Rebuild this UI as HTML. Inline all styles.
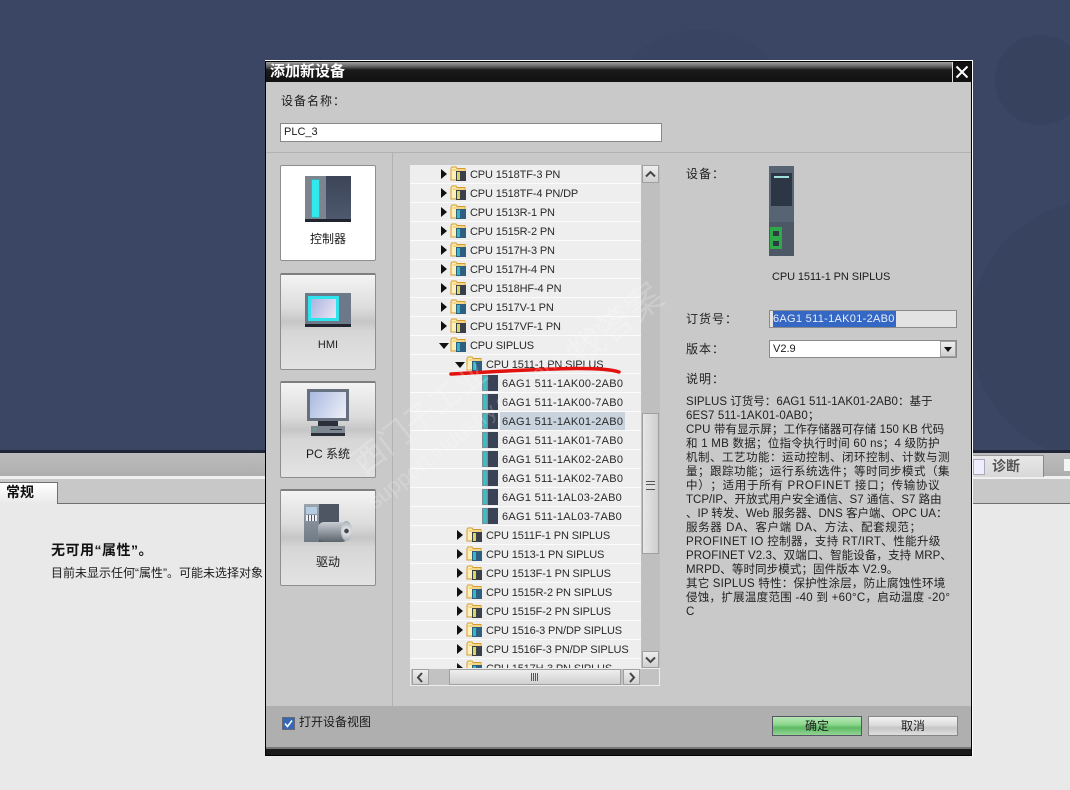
<!DOCTYPE html>
<html lang="zh"><head><meta charset="utf-8"><title>添加新设备</title>
<style>
html,body{margin:0;padding:0;width:1070px;height:790px;overflow:hidden;background:#e9e9e9}
body{position:relative;font-family:"Liberation Sans","Noto Sans CJK SC",sans-serif;font-size:12px;color:#1c1c1c;text-spacing-trim:space-all}
div,span,svg{position:absolute;display:block}
.t{white-space:nowrap;line-height:14px}
.row{left:0;width:231px;height:18px;background:#eeeeee;border-bottom:1px solid #fbfbfb}
.lab{white-space:nowrap;line-height:18px;font-size:11px;top:1px;letter-spacing:-.14px;color:#2a2a2a}
.g{letter-spacing:.28px}
.tri{width:0;height:0;border-style:solid;border-color:transparent transparent transparent #111;border-width:5px 0 5px 6px;top:4px}
.dn{width:0;height:0;border-style:solid;border-color:#111 transparent transparent;border-width:6px 5px 0 5px;top:7px}
.cat{left:15px;width:94px;height:94px;border:1px solid #8e8e8e;border-radius:2px;background:linear-gradient(#f4f4f4 0,#dcdcdc 35%,#c6c6c6 50%,#d6d6d6 60%,#e3e3e3 100%);border-top:2px solid #7e7e7e}
.cl{left:0;width:94px;text-align:center;top:63px;line-height:16px;white-space:nowrap}
.sb{background:linear-gradient(#eeeeee,#d0d0d0);border:1px solid #a0a0a0;box-sizing:border-box}
.d{left:686px;white-space:nowrap;font-size:12px;line-height:14px;color:#222}
.k{letter-spacing:1px}
.w{font-size:11.500px;letter-spacing:.1px}
.wm{color:rgba(255,255,255,.2);white-space:nowrap;transform-origin:0 100%;transform:rotate(-38deg)}
</style></head><body>
<svg width="0" height="0" style="left:0;top:0"><defs>
<symbol id="fb" viewBox="0 0 17 15"><path d="M1 14V2.500L2 1h4l1 1.500h8V14z" fill="#fdf0b8" stroke="#d69b2a"/><path d="M2.500 4H14" stroke="#e9bd55"/><rect x="6" y="5" width="10" height="10" fill="#2f5f80"/><rect x="7" y="6" width="3" height="8" fill="#33b9c6"/></symbol>
<symbol id="fd" viewBox="0 0 17 15"><path d="M1 14V2.500L2 1h4l1 1.500h8V14z" fill="#fdf0b8" stroke="#d69b2a"/><path d="M2.500 4H14" stroke="#e9bd55"/><rect x="6" y="5" width="10" height="10" fill="#39404a"/><rect x="7" y="6" width="3" height="8" fill="#d8d860"/></symbol>
<symbol id="dv" viewBox="0 0 16 16"><rect width="16" height="16" fill="#3e4b5e"/><rect x="0" width="6" height="16" fill="#7f8f98"/><rect x="1.500" y="1" width="3" height="14" fill="#2fc5cb"/><rect x="6" y="0" width="10" height="16" fill="#3a4356"/></symbol>
</defs></svg>

<!-- background -->
<div style="left:0;top:0;width:1070px;height:450px;background:#3a4664;overflow:hidden">
<svg width="1070" height="450" style="left:0;top:0"><circle cx="700" cy="130" r="100" fill="#384461"/><circle cx="1100" cy="330" r="130" fill="#37435f"/><circle cx="1040" cy="80" r="45" fill="#36425e"/></svg>
</div>
<div style="left:0;top:450px;width:1070px;height:3px;background:#1f2638"></div>
<div style="left:0;top:453px;width:1070px;height:23px;background:linear-gradient(#bdbdbd,#aeaeae)"></div>
<div style="left:0;top:476px;width:1070px;height:3px;background:#f0f0f0"></div>
<div style="left:0;top:479px;width:1070px;height:24px;background:#c8c8c8;border-bottom:1px solid #6f6f6f"></div>
<div style="left:0;top:482px;width:57px;height:22px;background:linear-gradient(#fff,#e8e8e8);border-right:1px solid #6f6f6f;border-top:1px solid #6f6f6f"></div>
<div class="t" style="left:6px;top:485px;font-size:14px;font-weight:bold;color:#111">常规</div>
<div style="left:0;top:504px;width:1070px;height:286px;background:#e9e9e9"></div>
<div class="t" style="left:51px;top:542px;font-size:14px;font-weight:bold;color:#111;line-height:16px;letter-spacing:.5px">无可用“属性”。</div>
<div class="t" style="left:51px;top:566px;font-size:12px">目前未显示任何“属性”。可能未选择对象</div>
<!-- right tab -->
<div style="left:972px;top:455px;width:71px;height:21px;background:linear-gradient(#e8e8e8,#d8d8d8);border-right:1px solid #888;border-top:1px solid #999"></div>
<div class="t" style="left:992px;top:458px;font-size:14px;font-weight:bold;color:#555;line-height:16px">诊断</div>
<div style="left:973px;top:459px;width:10px;height:14px;background:#eef;border:1px solid #aab"></div>
<div style="left:1064px;top:459px;width:6px;height:12px;background:#f4f4f4"></div>
<div style="left:972px;top:479px;width:98px;height:24px;background:#c8c8c8"></div>

<!-- dialog -->
<div style="left:265px;top:60px;width:707px;height:696px;background:#000;border-top:1px solid #fff;box-sizing:border-box"></div>
<div style="left:972px;top:60px;width:1px;height:697px;background:#fff"></div>
<div style="left:266px;top:62px;width:705px;height:20px;background:linear-gradient(#a0a0a0 0,#6a6a6a 20%,#1a1a1a 40%,#111 100%)"></div>
<div class="t" style="left:270px;top:63px;font-size:15px;color:#fff;font-weight:bold;line-height:18px">添加新设备</div>
<div style="left:952px;top:62px;width:19px;height:20px;background:#111;border-left:1px solid #ddd;box-sizing:border-box"></div>
<svg style="left:955px;top:65px" width="14" height="14" viewBox="0 0 14 14"><path d="M1.500 1.500L12.500 12.500M12.500 1.500L1.500 12.500" stroke="#fff" stroke-width="2"/></svg>
<div style="left:266px;top:82px;width:705px;height:666px;background:#c9c9c9"></div>
<div class="t k" style="left:281px;top:94px">设备名称：</div>
<div style="left:280px;top:123px;width:380px;height:17px;background:#fff;border:1px solid #888"></div>
<div class="t" style="left:284px;top:125px;font-size:11px">PLC_3</div>
<div style="left:266px;top:152px;width:705px;height:1px;background:#b2b2b2"></div>
<div style="left:392px;top:153px;width:1px;height:553px;background:#b2b2b2"></div>

<!-- category buttons -->
<div style="left:280px;top:165px;width:94px;height:94px;background:#fff;border:1px solid #8e8e8e;border-radius:2px"></div>
<div class="t" style="left:280px;top:232px;width:96px;text-align:center">控制器</div>
<div style="left:305px;top:176px;width:46px;height:46px;background:#3f4a60"></div>
<div style="left:305px;top:176px;width:21px;height:46px;background:#7c858f"></div>
<div style="left:311px;top:179px;width:9px;height:39px;background:#2fe9ef;border:1px solid #4aa;box-sizing:border-box"></div>
<div style="left:326px;top:176px;width:25px;height:44px;background:linear-gradient(#3c4558,#4e596e)"></div>
<div style="left:305px;top:219px;width:46px;height:3px;background:#20242e"></div>

<div class="cat" style="left:280px;top:273px"><div class="cl" style="left:0;top:62px;font-size:11px;color:#222">HMI</div></div>
<div style="left:305px;top:293px;width:46px;height:34px;background:#6d7888"></div>
<div style="left:308px;top:296px;width:31px;height:25px;background:#2fe3ee"></div>
<div style="left:311px;top:299px;width:25px;height:19px;background:linear-gradient(120deg,#a8b4df,#ece6f4)"></div>
<div style="left:305px;top:324px;width:46px;height:3px;background:#20242e"></div>

<div class="cat" style="left:280px;top:381px"><div class="cl" style="left:0;top:63px">PC 系统</div></div>
<div style="left:307px;top:389px;width:42px;height:32px;background:#66707e"></div>
<div style="left:310px;top:392px;width:36px;height:26px;background:linear-gradient(120deg,#a9b8e0,#eef1f8)"></div>
<div style="left:318px;top:421px;width:20px;height:5px;background:#2a2f3a"></div>
<div style="left:311px;top:426px;width:34px;height:7px;background:#7e8791"></div>
<div style="left:311px;top:433px;width:34px;height:3px;background:#2a2f3a"></div>
<div style="left:313px;top:428px;width:3px;height:3px;background:#5aa886"></div>
<div style="left:330px;top:429px;width:12px;height:1px;background:#2a2f3a"></div>

<div class="cat" style="left:280px;top:489px"><div class="cl" style="left:0;top:63px">驱动</div></div>
<div style="left:304px;top:504px;width:35px;height:38px;background:#4d5662"></div>
<div style="left:304px;top:504px;width:15px;height:38px;background:linear-gradient(#9aa4ae,#707a84)"></div>
<div style="left:306px;top:507px;width:11px;height:7px;background:#b5cde2"></div>
<div style="left:306px;top:515px;width:11px;height:6px;background:repeating-linear-gradient(90deg,#eef2f4 0,#eef2f4 2px,#556 2px,#556 3px)"></div>
<div style="left:318px;top:522px;width:30px;height:20px;background:linear-gradient(#c9ced4,#5c646c);border-radius:6px"></div>
<div style="left:341px;top:521px;width:11px;height:20px;background:radial-gradient(circle,#444 15%,#dde2e6 25%,#9aa3aa 100%);border-radius:50%"></div>

<!-- tree -->
<div style="left:410px;top:165px;width:250px;height:521px;background:#eee;overflow:hidden" id="tree">
<div class="row" style="top:0"><span class="tri" style="left:31px"></span><svg style="left:40px;top:1px" width="17" height="15"><use href="#fd"/></svg><span class="lab" style="left:60px">CPU 1518TF-3 PN</span></div>
<div class="row" style="top:19px"><span class="tri" style="left:31px"></span><svg style="left:40px;top:1px" width="17" height="15"><use href="#fd"/></svg><span class="lab" style="left:60px">CPU 1518TF-4 PN/DP</span></div>
<div class="row" style="top:38px"><span class="tri" style="left:31px"></span><svg style="left:40px;top:1px" width="17" height="15"><use href="#fb"/></svg><span class="lab" style="left:60px">CPU 1513R-1 PN</span></div>
<div class="row" style="top:57px"><span class="tri" style="left:31px"></span><svg style="left:40px;top:1px" width="17" height="15"><use href="#fb"/></svg><span class="lab" style="left:60px">CPU 1515R-2 PN</span></div>
<div class="row" style="top:76px"><span class="tri" style="left:31px"></span><svg style="left:40px;top:1px" width="17" height="15"><use href="#fb"/></svg><span class="lab" style="left:60px">CPU 1517H-3 PN</span></div>
<div class="row" style="top:95px"><span class="tri" style="left:31px"></span><svg style="left:40px;top:1px" width="17" height="15"><use href="#fb"/></svg><span class="lab" style="left:60px">CPU 1517H-4 PN</span></div>
<div class="row" style="top:114px"><span class="tri" style="left:31px"></span><svg style="left:40px;top:1px" width="17" height="15"><use href="#fd"/></svg><span class="lab" style="left:60px">CPU 1518HF-4 PN</span></div>
<div class="row" style="top:133px"><span class="tri" style="left:31px"></span><svg style="left:40px;top:1px" width="17" height="15"><use href="#fb"/></svg><span class="lab" style="left:60px">CPU 1517V-1 PN</span></div>
<div class="row" style="top:152px"><span class="tri" style="left:31px"></span><svg style="left:40px;top:1px" width="17" height="15"><use href="#fd"/></svg><span class="lab" style="left:60px">CPU 1517VF-1 PN</span></div>
<div class="row" style="top:171px"><span class="dn" style="left:29px"></span><svg style="left:40px;top:1px" width="17" height="15"><use href="#fb"/></svg><span class="lab" style="left:60px">CPU SIPLUS</span></div>
<div class="row" style="top:190px"><span class="dn" style="left:45px"></span><svg style="left:56px;top:1px" width="17" height="15"><use href="#fb"/></svg><span class="lab" style="left:76px">CPU 1511-1 PN SIPLUS</span></div>
<div class="row" style="top:209px"><svg style="left:72px;top:1px" width="16" height="16"><use href="#dv"/></svg><span class="lab g" style="left:92px">6AG1 511-1AK00-2AB0</span></div>
<div class="row" style="top:228px"><svg style="left:72px;top:1px" width="16" height="16"><use href="#dv"/></svg><span class="lab g" style="left:92px">6AG1 511-1AK00-7AB0</span></div>
<div class="row" style="top:247px"><svg style="left:72px;top:1px" width="16" height="16"><use href="#dv"/></svg><span style="left:90px;top:0;width:125px;height:18px;background:#c9d3de"></span><span class="lab g" style="left:92px">6AG1 511-1AK01-2AB0</span></div>
<div class="row" style="top:266px"><svg style="left:72px;top:1px" width="16" height="16"><use href="#dv"/></svg><span class="lab g" style="left:92px">6AG1 511-1AK01-7AB0</span></div>
<div class="row" style="top:285px"><svg style="left:72px;top:1px" width="16" height="16"><use href="#dv"/></svg><span class="lab g" style="left:92px">6AG1 511-1AK02-2AB0</span></div>
<div class="row" style="top:304px"><svg style="left:72px;top:1px" width="16" height="16"><use href="#dv"/></svg><span class="lab g" style="left:92px">6AG1 511-1AK02-7AB0</span></div>
<div class="row" style="top:323px"><svg style="left:72px;top:1px" width="16" height="16"><use href="#dv"/></svg><span class="lab g" style="left:92px">6AG1 511-1AL03-2AB0</span></div>
<div class="row" style="top:342px"><svg style="left:72px;top:1px" width="16" height="16"><use href="#dv"/></svg><span class="lab g" style="left:92px">6AG1 511-1AL03-7AB0</span></div>
<div class="row" style="top:361px"><span class="tri" style="left:47px"></span><svg style="left:56px;top:1px" width="17" height="15"><use href="#fd"/></svg><span class="lab" style="left:76px">CPU 1511F-1 PN SIPLUS</span></div>
<div class="row" style="top:380px"><span class="tri" style="left:47px"></span><svg style="left:56px;top:1px" width="17" height="15"><use href="#fb"/></svg><span class="lab" style="left:76px">CPU 1513-1 PN SIPLUS</span></div>
<div class="row" style="top:399px"><span class="tri" style="left:47px"></span><svg style="left:56px;top:1px" width="17" height="15"><use href="#fd"/></svg><span class="lab" style="left:76px">CPU 1513F-1 PN SIPLUS</span></div>
<div class="row" style="top:418px"><span class="tri" style="left:47px"></span><svg style="left:56px;top:1px" width="17" height="15"><use href="#fb"/></svg><span class="lab" style="left:76px">CPU 1515R-2 PN SIPLUS</span></div>
<div class="row" style="top:437px"><span class="tri" style="left:47px"></span><svg style="left:56px;top:1px" width="17" height="15"><use href="#fd"/></svg><span class="lab" style="left:76px">CPU 1515F-2 PN SIPLUS</span></div>
<div class="row" style="top:456px"><span class="tri" style="left:47px"></span><svg style="left:56px;top:1px" width="17" height="15"><use href="#fb"/></svg><span class="lab" style="left:76px">CPU 1516-3 PN/DP SIPLUS</span></div>
<div class="row" style="top:475px"><span class="tri" style="left:47px"></span><svg style="left:56px;top:1px" width="17" height="15"><use href="#fd"/></svg><span class="lab" style="left:76px">CPU 1516F-3 PN/DP SIPLUS</span></div>
<div class="row" style="top:494px"><span class="tri" style="left:47px"></span><svg style="left:56px;top:1px" width="17" height="15"><use href="#fb"/></svg><span class="lab" style="left:76px">CPU 1517H-3 PN SIPLUS</span></div>
<!-- v scrollbar -->
<div style="left:231px;top:0;width:19px;height:503px;background:#bfbfbf"></div>
<!-- h scrollbar -->
<div style="left:0;top:503px;width:250px;height:18px;background:#c2c2c2;border:1px solid #ededed;box-sizing:border-box"></div>
</div>
<div class="sb" style="left:642px;top:165px;width:17px;height:18px"></div>
<svg style="left:645px;top:170px" width="11" height="8"><path d="M1 6.500L5.500 2L10 6.500" fill="none" stroke="#444" stroke-width="2"/></svg>
<div class="sb" style="left:642px;top:413px;width:17px;height:141px;background:linear-gradient(90deg,#e6e6e6,#cfcfcf)"></div>
<div style="left:646px;top:481px;width:9px;height:7px;border-top:1px solid #555;border-bottom:1px solid #555;background:linear-gradient(#e0e0e0 0,#e0e0e0 2px,#555 2px,#555 3px,#e0e0e0 3px)"></div>
<div class="sb" style="left:642px;top:651px;width:17px;height:17px"></div>
<svg style="left:645px;top:656px" width="11" height="8"><path d="M1 1.500L5.500 6L10 1.500" fill="none" stroke="#444" stroke-width="2"/></svg>
<div class="sb" style="left:412px;top:669px;width:17px;height:16px"></div>
<svg style="left:416px;top:672px" width="8" height="11"><path d="M6 1L2 5.500L6 10" fill="none" stroke="#444" stroke-width="2"/></svg>
<div class="sb" style="left:449px;top:669px;width:172px;height:16px"></div>
<div style="left:531px;top:673px;width:1px;height:8px;background:#555;box-shadow:2px 0 #555,4px 0 #555,6px 0 #555"></div>
<div class="sb" style="left:623px;top:669px;width:17px;height:16px"></div>
<svg style="left:628px;top:672px" width="8" height="11"><path d="M2 1L6 5.500L2 10" fill="none" stroke="#444" stroke-width="2"/></svg>

<!-- red underline -->
<svg style="left:445px;top:360px" width="180" height="20"><path d="M6 14C40 12 90 9 130 8.500C150 8.300 165 9 174 12" fill="none" stroke="#e3120e" stroke-width="3.500" stroke-linecap="round"/></svg>

<!-- right pane -->
<div class="d k" style="top:167px">设备：</div>
<div style="left:769px;top:166px;width:25px;height:90px;background:#566473"></div>
<div style="left:771px;top:173px;width:21px;height:33px;background:#2c3645"></div>
<div style="left:774px;top:176px;width:15px;height:2px;background:#9fe0d8"></div>
<div style="left:769px;top:222px;width:25px;height:34px;background:#4d5866"></div>
<div style="left:770px;top:227px;width:12px;height:22px;background:#2fa84a"></div>
<div style="left:773px;top:231px;width:6px;height:5px;background:#2c3a44"></div>
<div style="left:773px;top:241px;width:6px;height:5px;background:#2c3a44"></div>
<div class="t" style="left:772px;top:270px;font-size:11px;letter-spacing:-.1px">CPU 1511-1 PN SIPLUS</div>
<div class="d k" style="top:312px">订货号：</div>
<div style="left:769px;top:310px;width:186px;height:16px;background:#e3e3e3;border:1px solid #8a8a8a"></div>
<div style="left:773px;top:311px;width:123px;height:16px;background:#3568c4"></div>
<div class="t" style="left:773px;top:312px;font-size:11px;color:#e8eef8;letter-spacing:.3px">6AG1 511-1AK01-2AB0</div>
<div class="d k" style="top:342px">版本：</div>
<div style="left:769px;top:340px;width:186px;height:16px;background:#fff;border:1px solid #8a8a8a"></div>
<div class="t" style="left:773px;top:342px;font-size:11px">V2.9</div>
<div class="sb" style="left:940px;top:341px;width:16px;height:16px"></div>
<div style="left:944px;top:347px;width:0;height:0;border-style:solid;border-color:#111 transparent transparent;border-width:5px 4px 0 4px"></div>
<div class="d k" style="top:372px">说明：</div>
<div class="d w" style="top:395px;letter-spacing:.02px">SIPLUS 订货号：6AG1 511-1AK01-2AB0：基于</div>
<div class="d w" style="top:409px">6ES7 511-1AK01-0AB0；</div>
<div class="d w" style="top:423px">CPU 带有显示屏；工作存储器可存储 150 KB 代码</div>
<div class="d w" style="top:437px;letter-spacing:.25px">和 1 MB 数据；位指令执行时间 60 ns；4 级防护</div>
<div class="d w" style="top:451px;letter-spacing:.5px">机制、工艺功能：运动控制、闭环控制、计数与测</div>
<div class="d w" style="top:465px;letter-spacing:.5px">量；跟踪功能；运行系统选件；等时同步模式（集</div>
<div class="d w" style="top:479px;letter-spacing:.7px">中）；适用于所有 PROFINET 接口；传输协议</div>
<div class="d w" style="top:493px;letter-spacing:0">TCP/IP、开放式用户安全通信、S7 通信、S7 路由</div>
<div class="d w" style="top:507px;letter-spacing:0">、IP 转发、Web 服务器、DNS 客户端、OPC UA：</div>
<div class="d w" style="top:521px;letter-spacing:.6px">服务器 DA、客户端 DA、方法、配套规范；</div>
<div class="d w" style="top:535px;letter-spacing:.4px">PROFINET IO 控制器，支持 RT/IRT、性能升级</div>
<div class="d w" style="top:549px">PROFINET V2.3、双端口、智能设备，支持 MRP、</div>
<div class="d w" style="top:563px">MRPD、等时同步模式；固件版本 V2.9。</div>
<div class="d w" style="top:577px;letter-spacing:.2px">其它 SIPLUS 特性：保护性涂层，防止腐蚀性环境</div>
<div class="d w" style="top:591px;letter-spacing:.28px">侵蚀，扩展温度范围 -40 到 +60°C，启动温度 -20°</div>
<div class="d w" style="top:605px">C</div>

<!-- watermark -->
<div class="wm" style="left:368px;top:445px;font-size:32px;line-height:36px">西门子工业</div>
<div class="wm" style="left:378px;top:490px;font-size:22px;line-height:24px">support.industry.siemens.com/cs</div>
<div class="wm" style="left:585px;top:335px;font-size:36px;line-height:38px">找答案</div>

<!-- footer -->
<div style="left:266px;top:706px;width:705px;height:42px;background:#afafaf"></div>
<div style="left:266px;top:747px;width:705px;height:2px;background:#777"></div>
<div style="left:266px;top:749px;width:705px;height:6px;background:#1a1a1a"></div>
<div style="left:282px;top:717px;width:11px;height:11px;background:#3568b4;border:1px solid #667"></div>
<svg style="left:283px;top:718px" width="11" height="11"><path d="M2 5.500L4.500 8.500L9 2.500" fill="none" stroke="#fff" stroke-width="1.500"/></svg>
<div class="t" style="left:299px;top:715px">打开设备视图</div>
<div style="left:772px;top:716px;width:88px;height:18px;background:linear-gradient(#b6e6b6,#8fd98f 40%,#5fba64 60%,#93d495);border:1px solid #556"></div>
<div class="t" style="left:772px;top:719px;width:90px;text-align:center">确定</div>
<div style="left:868px;top:716px;width:88px;height:18px;background:linear-gradient(#f2f2f2,#dcdcdc 45%,#c6c6c6 60%,#dedede);border:1px solid #858585"></div>
<div class="t" style="left:868px;top:719px;width:90px;text-align:center">取消</div>
</body></html>
